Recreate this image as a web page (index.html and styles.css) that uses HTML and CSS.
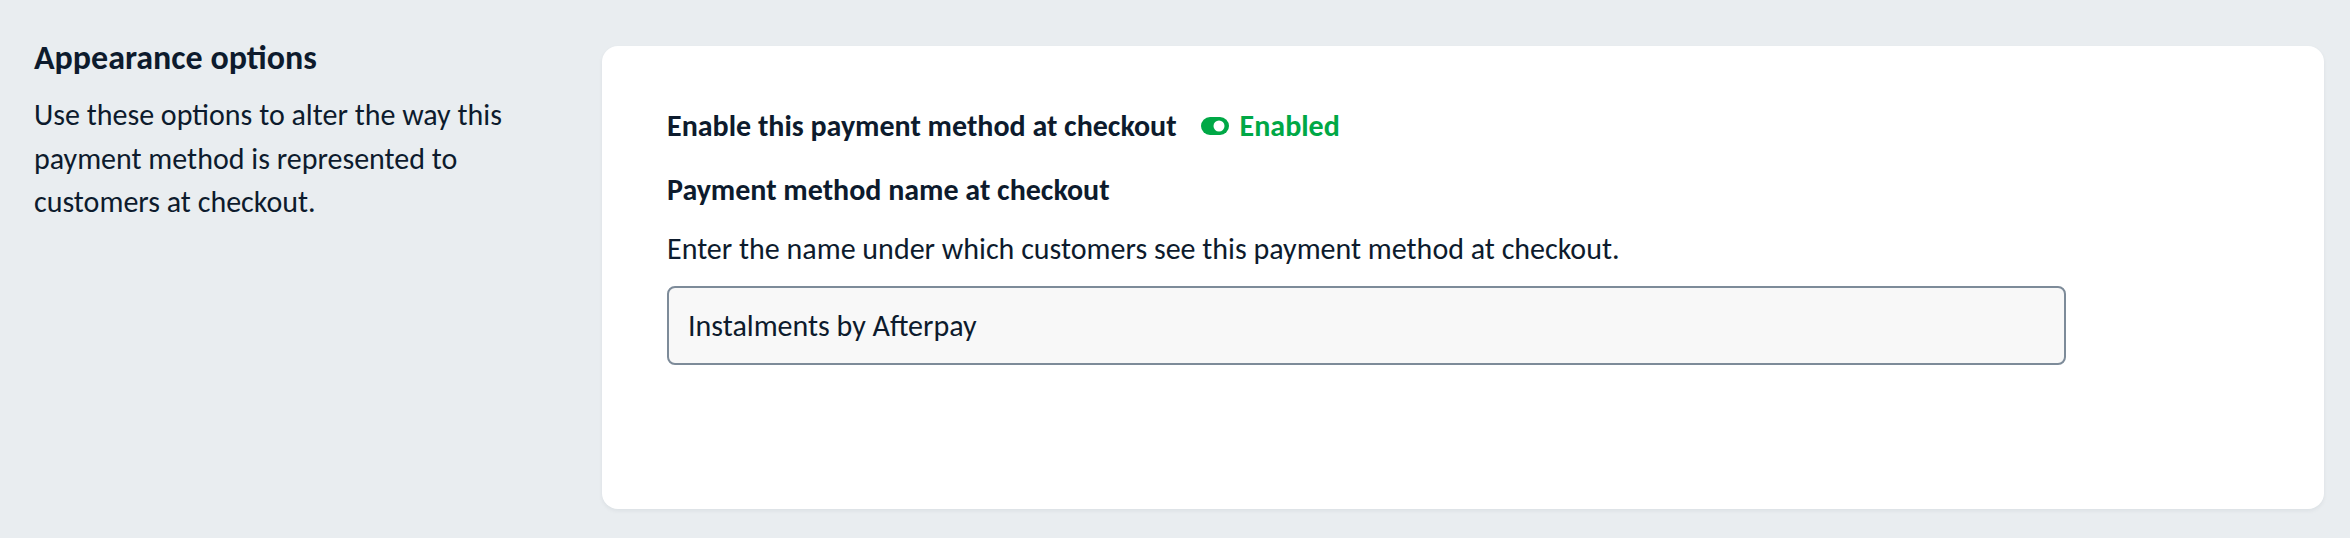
FILE: index.html
```html
<!DOCTYPE html>
<html lang="en">
<head>
<meta charset="utf-8">
<title>Appearance options</title>
<link rel="stylesheet" href="styles.css">
</head>
<body>
<div class="page">
  <section class="intro">
    <h2 class="intro-title">Appearance options</h2>
    <p class="intro-text">Use these options to alter the way this payment method is represented to customers at checkout.</p>
  </section>
  <section class="card">
    <div class="field-row">
      <span class="field-label">Enable this payment method at checkout</span>
      <span class="status">
        <svg class="toggle" width="28" height="18" viewBox="0 0 28 18" aria-hidden="true">
          <rect x="0" y="0" width="28" height="18" rx="9" fill="#00a846"/>
          <circle cx="18" cy="9" r="5.5" fill="#ffffff"/>
        </svg>
        <span class="status-text">Enabled</span>
      </span>
    </div>
    <div class="field-label field-label-second">Payment method name at checkout</div>
    <p class="field-help">Enter the name under which customers see this payment method at checkout.</p>
    <input class="text-input" type="text" value="Instalments by Afterpay">
  </section>
</div>
</body>
</html>
```

FILE: styles.css
```css
* {
  box-sizing: border-box;
}

html, body {
  margin: 0;
  padding: 0;
}

body {
  background: #e9edf0;
  color: #0d1b2d;
  font-family: Carlito, Lato, "Noto Sans", "Liberation Sans", sans-serif;
}

.page {
  display: grid;
  grid-template-columns: 540px 1fr;
  column-gap: 28px;
  padding: 38px 26px 28px 34px;
  align-items: start;
}

.intro-title {
  margin: 0 0 15px 0;
  font-size: 34px;
  line-height: 40px;
  font-weight: 700;
}

.intro-text {
  margin: 0;
  font-size: 30px;
  line-height: 43.5px;
  font-weight: 400;
}

.card {
  margin-top: 8px;
  background: #ffffff;
  border-radius: 16px;
  box-shadow: 0 2px 4px rgba(16, 32, 48, 0.06);
  padding: 62px 65px 144px 65px;
}

.field-row {
  display: flex;
  align-items: center;
  gap: 24px;
}

.field-label {
  font-size: 30px;
  line-height: 36px;
  font-weight: 700;
}

.field-label-second {
  margin-top: 28px;
}

.status {
  display: inline-flex;
  align-items: center;
  gap: 11px;
  color: #00a846;
  font-size: 30px;
  line-height: 36px;
  font-weight: 700;
}

.toggle {
  display: block;
}

.field-help {
  margin: 21px 0 17px 0;
  font-size: 30px;
  line-height: 40px;
}

.text-input {
  display: block;
  width: 1399px;
  height: 79px;
  padding: 0 19px;
  border: 2px solid #7d8b99;
  border-radius: 8px;
  background: #f8f8f8;
  color: #0d1b2d;
  font-family: Carlito, Lato, "Noto Sans", "Liberation Sans", sans-serif;
  font-size: 30px;
  outline: none;
}
```
